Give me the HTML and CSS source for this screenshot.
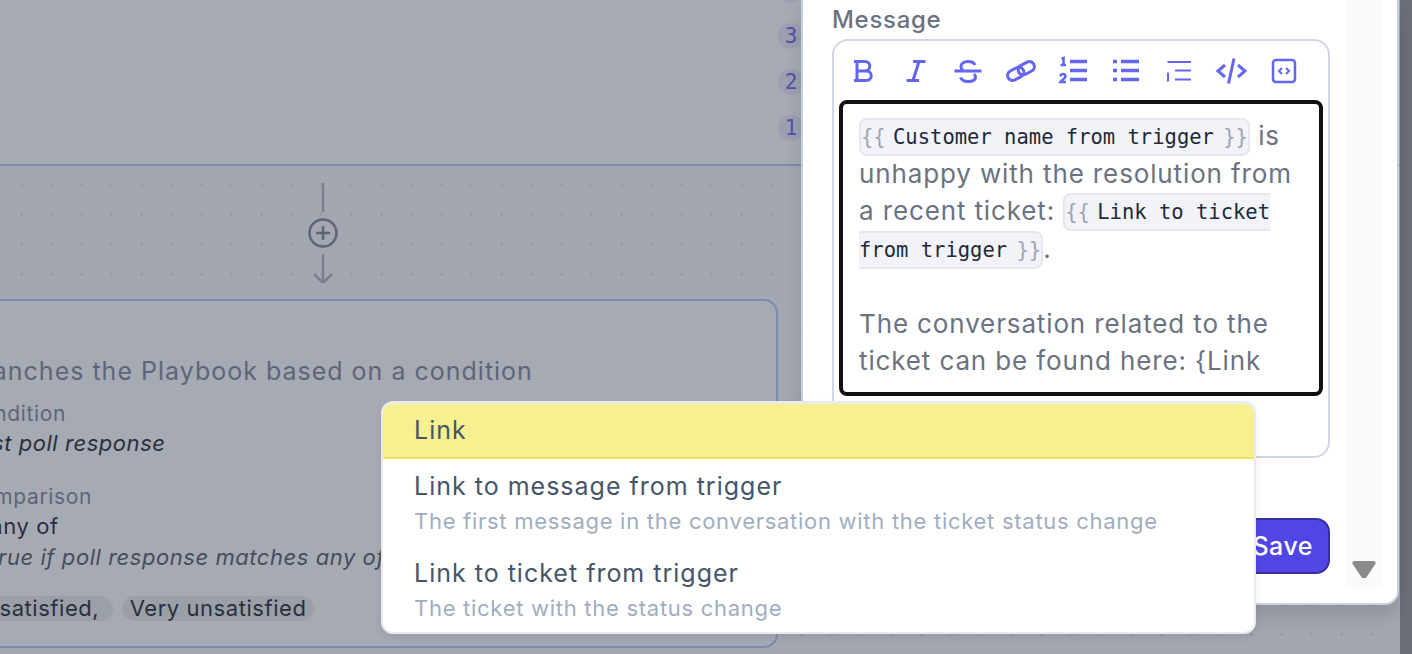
FILE: index.html
```html
<!DOCTYPE html>
<html lang="en">
  <head>
    <meta charset="UTF-8" />
    <title>Playbook editor</title>
    <link rel="stylesheet" href="styles.css">
  </head>
  <body>
    <div class="page">
      <div class="canvas">
        <div class="band">
          <div class="steps">
            <span class="step"></span>
            <span class="step">3</span>
            <span class="step">2</span>
            <span class="step">1</span>
          </div>
        </div>
        <div class="board">
          <svg class="connector" width="30" height="100" viewBox="0 0 30 100" fill="none">
            <path class="connector-line" d="M15 0V29M15 71V99M6 91l9 9 9-9" />
            <circle class="connector-plus" cx="15" cy="50" r="13.5" />
            <path class="connector-plus" d="M15 43v14M8 50h14" />
          </svg>
          <div class="card">
            <p class="card-desc">Branches the Playbook based on a condition</p>
            <p class="card-label">Condition</p>
            <p class="card-value"><em>Last poll response</em></p>
            <p class="card-label card-label-gap">Comparison</p>
            <p class="card-value">Is any of</p>
            <p class="card-note">Is true if poll response matches any of the following</p>
            <div class="tags">
              <span class="tag">Unsatisfied,</span>
              <span class="tag">Very unsatisfied</span>
            </div>
          </div>
        </div>
      </div>
      <div class="strip"></div>

      <aside class="panel">
        <div class="panel-main">
          <label class="field-label">Message</label>
          <div class="editor">
            <div class="toolbar">
              <svg class="tool" viewBox="0 0 32 32"><path d="M7 6.500h11a4.750 4.750 0 0 1 0 9.500h-8M10 6.500v19M10 16h9.500a4.750 4.750 0 0 1 0 9.500H7" /></svg>
              <svg class="tool" viewBox="0 0 32 32"><path d="M13 6.500h12.500M6.500 25.500h12.500M19 6.500l-6 19" /></svg>
              <svg class="tool" viewBox="0 0 32 32"><path d="M2.500 16h27M23 10c-1-2.500-3.500-3.500-7-3.500-4 0-7 2-7 5 0 1.500.5 3 2 4M22 19c1 1 1.500 2 1.500 3 0 3-3 4.500-7.500 4.500-4 0-6.500-1.500-7.500-4" /></svg>
              <svg class="tool" viewBox="0 0 32 32"><g transform="rotate(-28 16 16)"><rect x="1.500" y="11" width="17" height="10" rx="5" /><rect x="13.500" y="11" width="17" height="10" rx="5" /></g></svg>
              <svg class="tool" viewBox="0 0 32 32"><path class="heavy" d="M13 6.500h17M13 15.500h17M13 24.500h17" /><path class="mid" d="M4.500 4l2-1v7M3.500 10h5.500M3.500 21.500a2.500 2.500 0 0 1 5 0c0 2-3 2.500-5 5.500h5.500" /></svg>
              <svg class="tool" viewBox="0 0 32 32"><path class="heavy" d="M11 6.500h18M11 15.500h18M11 24.500h18M3 6.500h4M3 15.500h4M3 24.500h4" /></svg>
              <svg class="tool" viewBox="0 0 32 32"><path class="thin" d="M4.500 7h23.500M12 15.500h16M12 24.500h16M5 17.500v9" /></svg>
              <svg class="tool" viewBox="0 0 32 32"><path d="M10 10l-7 6 7 6M23 10l7 6-7 6M19 3.500L13.500 28.500" /></svg>
              <svg class="tool" viewBox="0 0 32 32"><rect class="mid" x="5" y="5" width="22" height="22" rx="3" /><path class="thin" d="M14 13l-3 3 3 3M18 13l3 3-3 3" /></svg>
            </div>
            <div class="editor-body">
              <span class="token"><i class="open">{{</i> Customer name from trigger <i class="close">}}</i></span> is unhappy with the resolution from a recent ticket: <span class="token"><i class="open">{{</i> Link to ticket from trigger <i class="close">}}</i></span>.<br /><br />The conversation related to the ticket can be found here: {Link
            </div>
          </div>
          <div class="panel-actions">
            <button class="save" type="button">Save</button>
          </div>
        </div>
        <div class="scroller"><span class="scroller-down"></span></div>
      </aside>

      <ul class="menu">
        <li class="menu-item menu-item-active"><span class="menu-title">Link</span></li>
        <li class="menu-item">
          <span class="menu-title">Link to message from trigger</span>
          <span class="menu-sub">The first message in the conversation with the ticket status change</span>
        </li>
        <li class="menu-item">
          <span class="menu-title">Link to ticket from trigger</span>
          <span class="menu-sub">The ticket with the status change</span>
        </li>
      </ul>
    </div>
  </body>
</html>
```

FILE: styles.css
```css
* {
  box-sizing: border-box;
}
body {
  margin: 0;
  font-family: "Inter", "Open Sans", sans-serif;
  color: #6b7280;
}
p {
  margin: 0;
}
.page {
  position: relative;
  display: flex;
  width: 1412px;
  height: 654px;
  overflow: hidden;
  background: #a3a7b0;
}
.canvas {
  width: 1400px;
  flex: none;
}
.strip {
  flex: 1;
  background: #6c6f77;
}
.band {
  display: flex;
  justify-content: flex-end;
  height: 166px;
  padding-right: 596px;
  background: #a6aab3;
  border-bottom: 2px solid #7f86b0;
}
.steps {
  display: flex;
  flex-direction: column;
  gap: 20px;
  margin-top: -23px;
}
.step {
  width: 26px;
  height: 26px;
  border-radius: 50%;
  background: #9c9fb0;
  color: #5450a8;
  font: 21px/26px "DejaVu Sans Mono", monospace;
  text-align: center;
}
.board {
  height: 488px;
  padding-top: 17px;
  background-image: conic-gradient(at 3px 3px, transparent 75%, #989ca6 0);
  background-size: 30px 30px;
  background-position: 20px 17px;
}
.connector {
  display: block;
  margin-left: 308px;
}
.connector-line {
  stroke: #7a7f8e;
  stroke-width: 2.5;
}
.connector-plus {
  stroke: #5f6579;
  stroke-width: 2.5;
}
.card {
  width: 978px;
  height: 349px;
  margin: 16px 0 0 -200px;
  padding: 54px 0 0 163px;
  background: #a6aab3;
  border: 2px solid #8087b3;
  border-radius: 14px;
  overflow: hidden;
  white-space: nowrap;
  color: #2a2f3d;
  font-size: 22px;
  letter-spacing: 0.55px;
}
.card-desc {
  color: #5f6579;
  font-size: 25px;
  letter-spacing: 1px;
  line-height: 32px;
}
.card-label {
  margin-top: 13px;
  color: #5f6579;
  font-size: 21px;
  letter-spacing: 0.65px;
  line-height: 28px;
}
.card-label-gap {
  margin-top: 25px;
}
.card-value {
  line-height: 30px;
}
.card-note {
  color: #474c5c;
  font-style: italic;
  line-height: 32px;
}
.tags {
  display: flex;
  gap: 8.5px;
  margin: 23px 0 0 -4px;
}
.tag {
  padding: 0 8px;
  border-radius: 13px;
  background: #9b9fa8;
  line-height: 25px;
}
.tag:first-child {
  padding-right: 14px;
}
.panel {
  position: absolute;
  top: 0;
  left: 801px;
  display: flex;
  gap: 15px;
  width: 598px;
  height: 605px;
  padding: 0 15px 15px 29px;
  background: #fff;
  border-left: 2px solid #c9cfdd;
  border-right: 2px solid #c9cfdd;
  border-bottom: 2px solid #c9cfdd;
  border-bottom-right-radius: 14px;
  box-shadow: 0 12px 18px rgba(0, 0, 0, 0.12);
}
.panel-main {
  display: flex;
  flex-direction: column;
  width: 498px;
  flex: none;
}
.field-label {
  height: 39px;
  padding-top: 4px;
  color: #6b7280;
  font-size: 24px;
  font-weight: 500;
  letter-spacing: 0.7px;
  line-height: 32px;
}
.editor {
  height: 419px;
  padding: 0 5px;
  border: 2px solid #d1d6e4;
  border-radius: 16px;
}
.toolbar {
  display: flex;
  gap: 20.6px;
  height: 59px;
  padding: 14px 0 0 8px;
}
.tool {
  width: 32px;
  height: 32px;
  flex: none;
  fill: none;
  stroke: #6366f1;
  stroke-width: 3;
}
.tool .heavy {
  stroke-width: 3.5;
}
.tool .mid {
  stroke-width: 2.5;
}
.tool .thin {
  stroke-width: 2;
}
.editor-body {
  height: 296px;
  padding: 13px 16px 0;
  overflow: hidden;
  border: 4px solid #111;
  border-radius: 8px;
  color: #6b7280;
  font-size: 26px;
  letter-spacing: 0.87px;
  line-height: 37.5px;
}
.token {
  padding: 5px 0;
  background: #f1f3f9;
  border: 2px solid #e5e7ef;
  border-radius: 8px;
  color: #1f2937;
  font-family: "DejaVu Sans Mono", monospace;
  font-size: 20.5px;
  letter-spacing: 0;
  line-height: 1;
  vertical-align: 1px;
}
.token i {
  color: #9ca3af;
  font-style: normal;
}
.token .open {
  margin-right: -5px;
}
.token .close {
  margin-left: -3px;
}
.panel-actions {
  display: flex;
  justify-content: flex-end;
  margin-top: 60px;
}
.save {
  height: 56px;
  padding: 0 15px 0 60px;
  background: #4f46e5;
  border: 2px solid #3730a3;
  border-radius: 14px;
  color: #fff;
  font: 500 25px "Inter", sans-serif;
  letter-spacing: 0.5px;
}
.scroller {
  position: relative;
  width: 38px;
  flex: none;
  background: #fafafa;
}
.scroller-down {
  position: absolute;
  left: 7px;
  bottom: 10px;
  width: 24px;
  height: 17px;
  background: #8a8a8a;
  clip-path: polygon(8% 0, 92% 0, 100% 12%, 58% 100%, 42% 100%, 0 12%);
}
.menu {
  position: absolute;
  top: 401px;
  left: 381px;
  width: 875px;
  height: 233px;
  margin: 0;
  padding: 0;
  overflow: hidden;
  list-style: none;
  background: #fff;
  border: 2px solid #e9ebef;
  border-top-width: 3px;
  border-radius: 12px;
  box-shadow: 0 4px 8px rgba(0, 0, 0, 0.08);
}
.menu-item {
  display: flex;
  flex-direction: column;
  padding: 8px 31px 0;
  height: 87px;
}
.menu-item-active {
  height: 55px;
  padding-top: 7px;
  background: #f8ef90;
  border-bottom: 2px solid #f5e05a;
}
.menu-title {
  color: #475569;
  font-size: 25px;
  letter-spacing: 1px;
  line-height: 38px;
}
.menu-sub {
  margin-top: 1px;
  color: #a0aec0;
  font-size: 22px;
  letter-spacing: 0.72px;
  line-height: 30px;
}
```
